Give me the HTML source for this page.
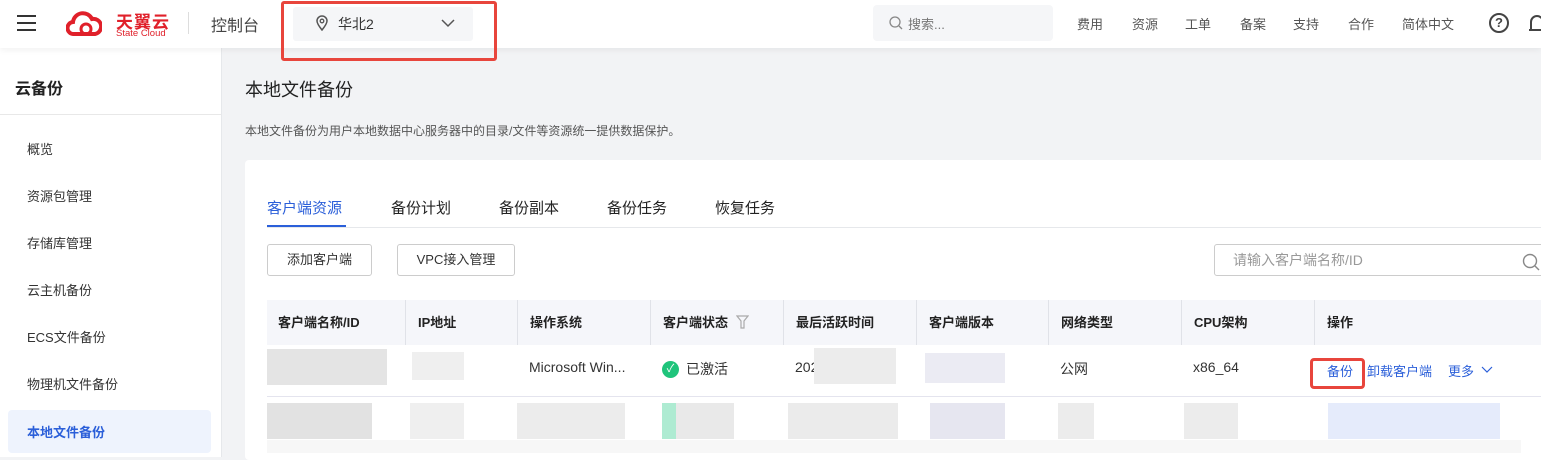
<!DOCTYPE html>
<html><head><meta charset="utf-8"><style>
*{box-sizing:border-box;margin:0;padding:0}
body{width:1541px;height:457px;overflow:hidden;background:#f2f3f5;font-family:"Liberation Sans","Noto Sans CJK SC",sans-serif;color:#333;position:relative}
.abs{position:absolute}
.top{left:0;top:0;width:1541px;height:48px;background:#fff;box-shadow:0 2px 6px rgba(0,0,0,.06);z-index:2}
.nav span{position:absolute;top:14px;font-size:13px;color:#555}
.side{left:0;top:48px;width:222px;height:409px;background:#fff;border-right:1px solid #e6e8eb}
.side .it{position:absolute;left:27px;font-size:13px;color:#333}
.card{left:245px;top:160px;width:1300px;height:300px;background:#fff;border-radius:4px}
.th{position:absolute;top:312px;font-size:13px;font-weight:bold;color:#222}
.td{position:absolute;top:359px;font-size:14px;color:#333}
.blur{position:absolute;background:#e8e8e8}
</style></head><body>
<div class="abs top">
 <div class="abs" style="left:17px;top:15px;width:19px;height:2px;background:#333;box-shadow:0 7px 0 #333,0 14px 0 #333"></div>
 <svg class="abs" style="left:66px;top:10px" width="36" height="28" viewBox="0 0 36 28"><path d="M8 24 A6 6 0 0 1 7 12 A10 10 0 0 1 26 9 A7 7 0 0 1 29 24 Z" fill="none" stroke="#e0202a" stroke-width="4"/><circle cx="20" cy="19" r="5" fill="none" stroke="#e0202a" stroke-width="3"/></svg>
 <div class="abs" style="left:116px;top:8px;font-size:17px;font-weight:bold;color:#e0202a;letter-spacing:1px">天翼云</div>
 <div class="abs" style="left:116px;top:28px;font-size:9.5px;color:#e0202a">State Cloud</div>
 <div class="abs" style="left:188px;top:12px;width:1px;height:22px;background:#ddd"></div>
 <div class="abs" style="left:211px;top:12px;font-size:16px;color:#444">控制台</div>
 <div class="abs" style="left:293px;top:7px;width:180px;height:34px;background:#f5f6f8;border-radius:3px"></div>
 <svg class="abs" style="left:315px;top:15px" width="14" height="16" viewBox="0 0 14 16"><path d="M7 15 C3 10 2 8 2 6 A5 5 0 0 1 12 6 C12 8 11 10 7 15Z" fill="none" stroke="#555" stroke-width="1.5"/><circle cx="7" cy="6" r="1.8" fill="none" stroke="#555" stroke-width="1.3"/></svg>
 <div class="abs" style="left:338px;top:14px;font-size:14px;color:#333">华北2</div>
 <svg class="abs" style="left:441px;top:19px" width="14" height="9"><path d="M1 1 L7 7 L13 1" fill="none" stroke="#555" stroke-width="1.5"/></svg>
 <div class="abs" style="left:281px;top:1px;width:216px;height:60px;border:3px solid #e8453c;border-radius:3px"></div>
 <div class="abs" style="left:873px;top:5px;width:180px;height:36px;background:#f5f6f8;border-radius:4px"></div>
 <svg class="abs" style="left:889px;top:16px" width="14" height="14"><circle cx="6" cy="6" r="5" fill="none" stroke="#888" stroke-width="1.3"/><path d="M10 10 L13 13" stroke="#888" stroke-width="1.3"/></svg>
 <div class="abs" style="left:908px;top:14px;font-size:13px;color:#777">搜索...</div>
 <div class="nav"><span style="left:1077px">费用</span><span style="left:1132px">资源</span><span style="left:1185px">工单</span><span style="left:1240px">备案</span><span style="left:1293px">支持</span><span style="left:1348px">合作</span><span style="left:1402px">简体中文</span></div>
 <div class="abs" style="left:1489px;top:13px;width:20px;height:20px;border:2px solid #444;border-radius:50%;font-size:13px;font-weight:bold;text-align:center;line-height:16px;color:#444">?</div>
 <svg class="abs" style="left:1529px;top:13px" width="12" height="22"><path d="M2 16 L2 9 A6 6 0 0 1 14 9 L14 16 M0 17 L16 17" fill="none" stroke="#444" stroke-width="2"/></svg>
</div>
<div class="abs side">
 <div class="abs" style="left:15px;top:27px;font-size:16px;font-weight:bold;color:#222">云备份</div>
 <div class="abs" style="left:0;top:66px;width:221px;height:1px;background:#e8e8e8"></div>
 <div class="it" style="top:91px">概览</div>
 <div class="it" style="top:138px">资源包管理</div>
 <div class="it" style="top:185px">存储库管理</div>
 <div class="it" style="top:232px">云主机备份</div>
 <div class="it" style="top:279px">ECS文件备份</div>
 <div class="it" style="top:326px">物理机文件备份</div>
 <div class="abs" style="left:8px;top:362px;width:203px;height:43px;background:#eef3fd;border-radius:4px"></div>
 <div class="it" style="top:374px;color:#2b5fd9;font-weight:bold">本地文件备份</div>
</div>
<div class="abs" style="left:245px;top:76px;font-size:18px;color:#222">本地文件备份</div>
<div class="abs" style="left:245px;top:122px;font-size:12px;color:#555">本地文件备份为用户本地数据中心服务器中的目录/文件等资源统一提供数据保护。</div>
<div class="abs card"></div>
<div class="abs" style="left:267px;top:197px;font-size:15px;color:#2b5fd9">客户端资源</div>
<div class="abs" style="left:391px;top:197px;font-size:15px;color:#222">备份计划</div>
<div class="abs" style="left:499px;top:197px;font-size:15px;color:#222">备份副本</div>
<div class="abs" style="left:607px;top:197px;font-size:15px;color:#222">备份任务</div>
<div class="abs" style="left:715px;top:197px;font-size:15px;color:#222">恢复任务</div>
<div class="abs" style="left:267px;top:227px;width:1274px;height:1px;background:#e6e8eb"></div>
<div class="abs" style="left:267px;top:225px;width:79px;height:2px;background:#2b5fd9"></div>
<div class="abs" style="left:267px;top:244px;width:105px;height:32px;border:1px solid #ccc;border-radius:3px;font-size:13px;text-align:center;line-height:30px">添加客户端</div>
<div class="abs" style="left:397px;top:244px;width:118px;height:32px;border:1px solid #ccc;border-radius:3px;font-size:13px;text-align:center;line-height:30px">VPC接入管理</div>
<div class="abs" style="left:1214px;top:244px;width:340px;height:32px;border:1px solid #ccc;border-radius:3px;font-size:14px;color:#999;padding:5px 0 0 18px">请输入客户端名称/ID</div>
<svg class="abs" style="left:1522px;top:253px" width="19" height="19"><circle cx="8" cy="8" r="6.5" fill="none" stroke="#888" stroke-width="1.4"/><path d="M13 13 L17 17" stroke="#888" stroke-width="1.4"/></svg>
<div class="abs" style="left:267px;top:300px;width:1274px;height:45px;background:#f5f6fa"></div>
<div class="abs" style="left:405px;top:300px;width:1px;height:45px;background:#e0e2e8;box-shadow:112px 0 #e0e2e8,245px 0 #e0e2e8,378px 0 #e0e2e8,511px 0 #e0e2e8,643px 0 #e0e2e8,776px 0 #e0e2e8,909px 0 #e0e2e8"></div>
<div class="th" style="left:278px">客户端名称/ID</div>
<div class="th" style="left:418px">IP地址</div>
<div class="th" style="left:530px">操作系统</div>
<div class="th" style="left:663px">客户端状态</div>
<svg class="abs" style="left:736px;top:315px" width="13" height="14"><path d="M1 1 L12 1 L8 6 L8 13 L5 13 L5 6 Z" fill="none" stroke="#aaa" stroke-width="1.2"/></svg>
<div class="th" style="left:796px">最后活跃时间</div>
<div class="th" style="left:929px">客户端版本</div>
<div class="th" style="left:1061px">网络类型</div>
<div class="th" style="left:1194px">CPU架构</div>
<div class="th" style="left:1327px">操作</div>
<div class="abs" style="left:267px;top:396px;width:1274px;height:1px;background:#e4e4ee"></div>
<div class="blur" style="left:267px;top:349px;width:120px;height:36px;background:#e4e4e4"></div>
<div class="blur" style="left:412px;top:352px;width:52px;height:28px;background:#efefef"></div>
<div class="td" style="left:529px">Microsoft Win...</div>
<div class="abs" style="left:662px;top:361px;width:17px;height:17px;border-radius:50%;background:#1fc47b;color:#fff;font-size:11px;text-align:center;line-height:17px">✓</div>
<div class="td" style="left:686px">已激活</div>
<div class="td" style="left:795px">2025</div>
<div class="blur" style="left:814px;top:348px;width:82px;height:36px;background:#ececec"></div>
<div class="blur" style="left:925px;top:353px;width:80px;height:30px;background:#ebebf3"></div>
<div class="td" style="left:1060px">公网</div>
<div class="td" style="left:1193px">x86_64</div>
<div class="td" style="left:1327px;color:#2b5fd9;font-size:13px;top:361px">备份</div>
<div class="abs" style="left:1310px;top:358px;width:55px;height:31px;border:3px solid #e8453c;border-radius:4px"></div>
<div class="td" style="left:1367px;color:#2b5fd9;font-size:13px;top:361px">卸载客户端</div>
<div class="td" style="left:1448px;color:#2b5fd9;font-size:13px;top:361px">更多</div>
<svg class="abs" style="left:1481px;top:366px" width="12" height="8"><path d="M1 1 L6 6 L11 1" fill="none" stroke="#2b5fd9" stroke-width="1.2"/></svg>
<div class="blur" style="left:267px;top:403px;width:105px;height:36px;background:#e2e2e2"></div>
<div class="blur" style="left:410px;top:403px;width:54px;height:36px;background:#efefef"></div>
<div class="blur" style="left:517px;top:403px;width:108px;height:36px;background:#ececec"></div>
<div class="blur" style="left:662px;top:403px;width:14px;height:36px;background:#aeebd2"></div>
<div class="blur" style="left:676px;top:403px;width:58px;height:36px;background:#e9e9e9"></div>
<div class="blur" style="left:788px;top:403px;width:110px;height:36px;background:#ebebeb"></div>
<div class="blur" style="left:930px;top:403px;width:75px;height:36px;background:#e6e6f0"></div>
<div class="blur" style="left:1058px;top:403px;width:36px;height:36px;background:#ececec"></div>
<div class="blur" style="left:1184px;top:403px;width:54px;height:36px;background:#ececec"></div>
<div class="blur" style="left:1328px;top:403px;width:172px;height:36px;background:#e5ebfb"></div>
<div class="abs" style="left:267px;top:440px;width:1254px;height:13px;background:#f7f7f7"></div>
</body></html>
